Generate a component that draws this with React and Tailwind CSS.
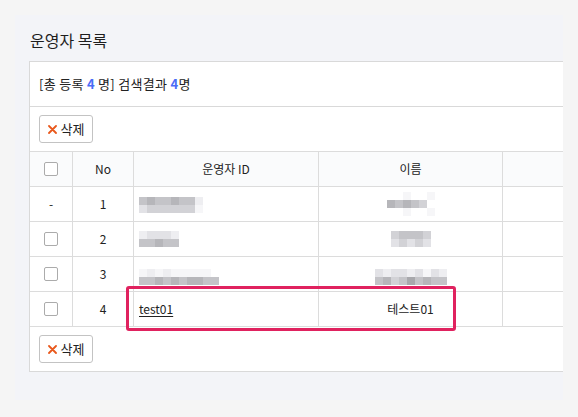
import React from "react";

const FONT = { fontFamily: '"Noto Sans CJK KR", "Liberation Sans", sans-serif' };

const shade = {
  a: "bg-[#a8a8ac]",
  b: "bg-[#b6b6ba]",
  c: "bg-[#c4c4c8]",
  d: "bg-[#d2d2d6]",
  e: "bg-[#e2e2e6]",
  f: "bg-[#eeeef1]",
  g: "bg-[#f6f6f8]",
  w: "bg-white",
};

const Mosaic = ({ rows, className = "" }) => (
  <div className={`flex flex-col ${className}`}>
    {rows.map((r, i) => (
      <div key={i} className="flex">
        {r.split("").map((ch, j) => (
          <div key={j} className={`w-[8px] h-[8px] ${shade[ch]}`} />
        ))}
      </div>
    ))}
  </div>
);

const Checkbox = () => <span className="inline-block w-[14px] h-[14px] border border-[#ababab] rounded-[2px] bg-white" />;

const DeleteButton = () => (
  <button type="button" className="h-[28px] w-[54px] flex items-center justify-center gap-[4px] border border-[#c3c3c3] rounded-[3px] bg-white text-[13px] text-[#222]">
    <svg width="9" height="9" viewBox="0 0 9 9" className="shrink-0">
      <path d="M1 1L8 8M8 1L1 8" stroke="#e9581c" strokeWidth="1.8" strokeLinecap="round" />
    </svg>
    <span>삭제</span>
  </button>
);

const rows = [
  {
    check: false,
    no: "1",
    id: <Mosaic className="mt-[1px]" rows={["cbccbccf", "eddddddg"]} />,
    name: <Mosaic rows={["wwgwwg", "bcbcd", "wwgwwg"]} />,
  },
  {
    check: true,
    no: "2",
    id: <Mosaic rows={["feeef", "ccbcc"]} />,
    name: <Mosaic rows={["dcccd", "edede"]} />,
  },
  {
    check: true,
    no: "3",
    id: <Mosaic className="mt-[6px]" rows={["gfgfgggggw", "ccbcbcbbcc"]} />,
    name: <Mosaic className="mt-[6px]" rows={["efeefegef", "cbdcacbcc"]} />,
  },
  {
    check: true,
    no: "4",
    id: <span className="underline underline-offset-2">test01</span>,
    name: <span>테스트01</span>,
  },
];

const cell = "h-[35px] border-r border-b border-[#dcdcdc] flex items-center text-[12px] text-[#222]";

export default function App() {
  return (
    <div className="w-[578px] h-[417px] bg-[#f5f5f5] pt-[15px] pl-[15px] overflow-hidden" style={FONT}>
      <div className="w-[548px] h-[385px] bg-[#f3f4f8] pt-[13px] pl-[14px]">
        <h2 className="pl-px h-[24px] leading-[24px] text-[16px] font-normal text-[#1e1e1e] mb-[9px]">운영자 목록</h2>
        <div className="relative bg-white border-t border-b border-l border-[#d9d9d9] w-[534px]">
          <div className="h-[45px] border-b border-[#d9d9d9] flex items-center pl-[9px] text-[13px] tracking-[0.3px] text-[#222]">
            [총 등록&nbsp;<b className="text-[#4a6cf7]">4</b>&nbsp;명] 검색결과&nbsp;<b className="text-[#4a6cf7]">4</b>명
          </div>
          <div className="py-2 pl-[9px]">
            <DeleteButton />
          </div>
          <div className="border-t border-[#dcdcdc] grid grid-cols-[43px_61px_185px_184px_60px]">
            <div className={`${cell} justify-center bg-[#fafbfc]`}>
              <Checkbox />
            </div>
            <div className={`${cell} justify-center bg-[#fafbfc]`}>No</div>
            <div className={`${cell} justify-center bg-[#fafbfc]`}>운영자 ID</div>
            <div className={`${cell} justify-center bg-[#fafbfc]`}>이름</div>
            <div className={`${cell} border-r-0 bg-[#fafbfc]`} />
            {rows.map((r) => (
              <React.Fragment key={r.no}>
                <div className={`${cell} justify-center`}>{r.check ? <Checkbox /> : <span>-</span>}</div>
                <div className={`${cell} justify-center`}>{r.no}</div>
                <div className={`${cell} pl-[5px]`}>{r.id}</div>
                <div className={`${cell} justify-center`}>{r.name}</div>
                <div className={`${cell} border-r-0`} />
              </React.Fragment>
            ))}
          </div>
          <div className="py-2 pl-[9px]">
            <DeleteButton />
          </div>
          <div className="absolute left-[96px] top-[224px] w-[330px] h-[45px] border-[3px] border-[#e0225f] rounded-[3px] pointer-events-none" />
        </div>
      </div>
    </div>
  );
}
